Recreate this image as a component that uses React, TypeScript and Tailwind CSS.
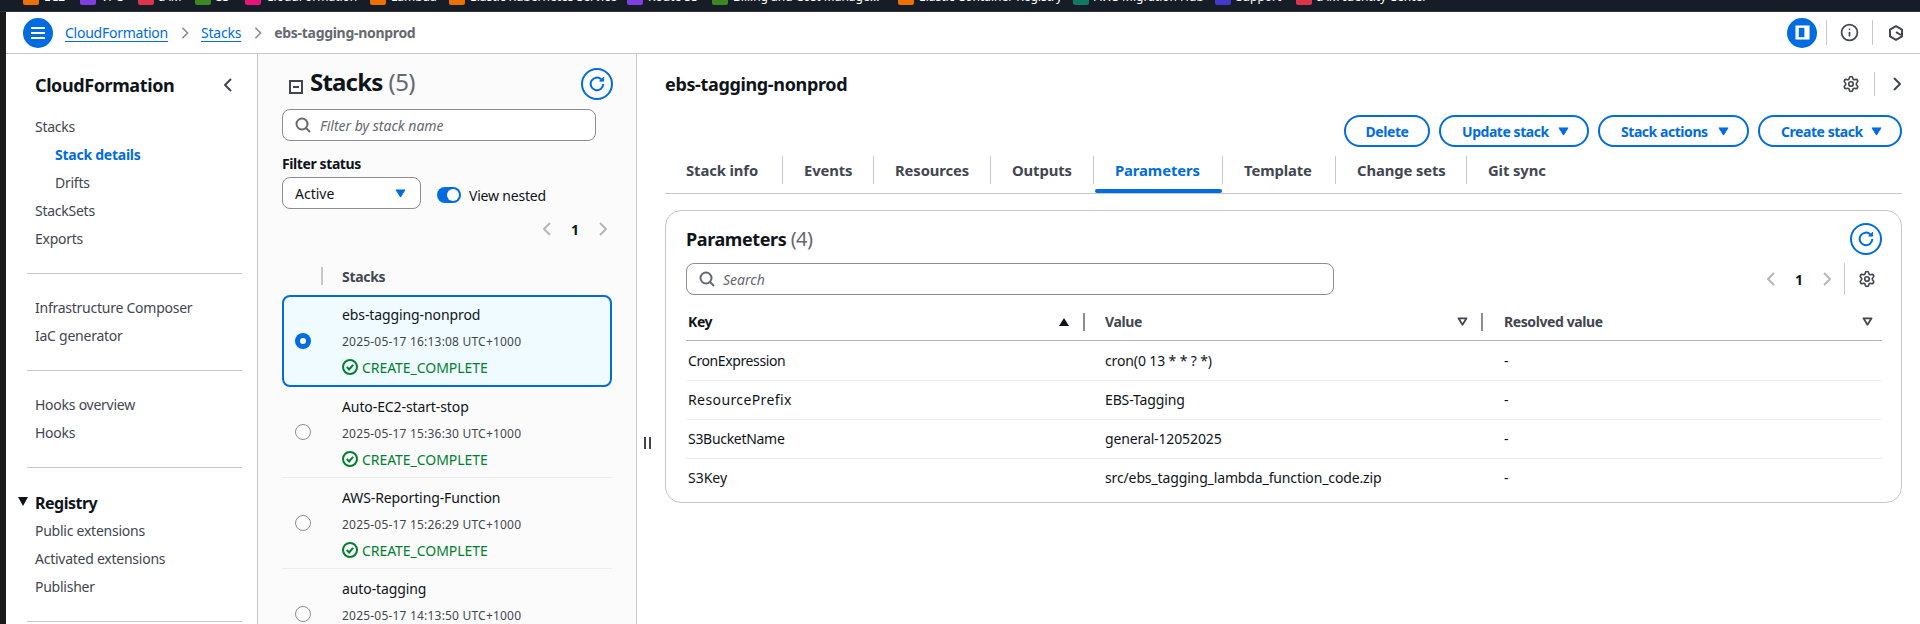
import { Info, Settings } from "lucide-react";

type IconProps = { className?: string };

const favourites = [
  { label: "EC2", box: "w-[57px] ml-[23px]", icon: "bg-[#ed7100]" },
  { label: "VPC", box: "w-[58px]", icon: "bg-[#7d3fe0]" },
  { label: "IAM", box: "w-[57px]", icon: "bg-[#dd344c]" },
  { label: "S3", box: "w-[50px]", icon: "bg-[#3f8624]" },
  { label: "CloudFormation", box: "w-[125px]", icon: "bg-[#e7157b]" },
  { label: "Lambda", box: "w-[79px]", icon: "bg-[#ed7100]" },
  { label: "Elastic Kubernetes Service", box: "w-[178px]", icon: "bg-[#ed7100]" },
  { label: "Route 53", box: "w-[85px]", icon: "bg-[#7d3fe0]" },
  { label: "Billing and Cost Manage...", box: "w-[186px]", icon: "bg-[#3f8624]" },
  { label: "Elastic Container Registry", box: "w-[175px]", icon: "bg-[#ed7100]" },
  { label: "AWS Migration Hub", box: "w-[142px]", icon: "bg-[#0e7a63]" },
  { label: "Support", box: "w-[81px]", icon: "bg-[#4338ca]" },
  { label: "IAM Identity Center", box: "w-[140px]", icon: "bg-[#dd344c]" },
];

const tabs = [
  { label: "Stack info", box: "w-[118px]" },
  { label: "Events", box: "w-[91px]" },
  { label: "Resources", box: "w-[117px]" },
  { label: "Outputs", box: "w-[103px]" },
  { label: "Parameters", box: "w-[129px]", active: true },
  { label: "Template", box: "w-[113px]" },
  { label: "Change sets", box: "w-[131px]" },
  { label: "Git sync", box: "w-[120px]", last: true },
];

const stacks = [
  { name: "ebs-tagging-nonprod", date: "2025-05-17 16:13:08 UTC+1000", selected: true },
  { name: "Auto-EC2-start-stop", date: "2025-05-17 15:36:30 UTC+1000" },
  { name: "AWS-Reporting-Function", date: "2025-05-17 15:26:29 UTC+1000" },
  { name: "auto-tagging", date: "2025-05-17 14:13:50 UTC+1000" },
];

const params = [
  { key: "CronExpression", value: "cron(0 13 * * ? *)", fit: "tracking-[-0.4px]" },
  { key: "ResourcePrefix", value: "EBS-Tagging", fit: "tracking-[0.4px]" },
  { key: "S3BucketName", value: "general-12052025", fit: "tracking-[-0.3px]" },
  { key: "S3Key", value: "src/ebs_tagging_lambda_function_code.zip", fit: "" },
];

function CaretDown({ className }: IconProps) {
  return (
    <svg viewBox="0 0 12 10" className={className} fill="currentColor">
      <path d="M1 1h10L6 9z" stroke="currentColor" strokeLinejoin="round" />
    </svg>
  );
}

function Chevron({ left, className }: IconProps & { left?: boolean }) {
  return (
    <svg viewBox="0 0 16 16" className={className} fill="none" stroke="currentColor" strokeWidth="2">
      <path d={left ? "M11 2 5 8l6 6" : "M5 2l6 6-6 6"} strokeLinejoin="round" />
    </svg>
  );
}

function Search({ className }: IconProps) {
  return (
    <svg viewBox="0 0 16 16" className={className} fill="none" stroke="currentColor" strokeWidth="2">
      <circle cx="7" cy="7" r="5.5" />
      <path d="m11 11 4 4" />
    </svg>
  );
}

function Refresh() {
  return (
    <span className="flex h-[32px] w-[32px] items-center justify-center rounded-full border-2 border-[#006ce0] text-[#006ce0]">
      <svg viewBox="0 0 16 16" className="h-4 w-4" fill="none" stroke="currentColor" strokeWidth="2">
        <path d="M14.3 8A6.3 6.3 0 1 1 12.4 3.4" />
        <path d="M14.6 1.2v3.9h-3.9z" fill="currentColor" strokeWidth="1" strokeLinejoin="round" />
      </svg>
    </span>
  );
}

function StatusOk() {
  return (
    <div className="mt-[5px] flex h-5 items-center text-[14px] tracking-[-0.05px] text-[#00802f]">
      <svg viewBox="0 0 16 16" className="mr-[4px] h-4 w-4" fill="none" stroke="currentColor" strokeWidth="2">
        <circle cx="8" cy="8" r="7" />
        <path d="m4.8 8 2.3 2.4 4-4.6" />
      </svg>
      CREATE_COMPLETE
    </div>
  );
}

function SortDown() {
  return (
    <svg viewBox="0 0 12 10" className="h-[9px] w-[11px] text-[#424650]" fill="none" stroke="currentColor" strokeWidth="2">
      <path d="M1.5 1.5h9L6 8.5z" strokeLinejoin="round" />
    </svg>
  );
}

function Pager() {
  return (
    <div className="flex items-center text-[#b4b4bb]">
      <Chevron left className="h-4 w-4" />
      <span className="w-[40px] text-center text-[14px] font-bold text-[#0f141a]">1</span>
      <Chevron className="h-4 w-4" />
    </div>
  );
}

function NavItem({ children, sub, active }: { children: string; sub?: boolean; active?: boolean }) {
  return (
    <div
      className={
        "flex h-[28px] items-center pb-px text-[14px] tracking-[-0.25px] " +
        (sub ? "pl-[20px] " : "") +
        (active ? "font-bold text-[#006ce0]" : "text-[#424650]")
      }
    >
      {children}
    </div>
  );
}

function Divider() {
  return <div className="my-5 h-px bg-[#c6c6cd]" />;
}

function ActionButton({ label, box, caret }: { label: string; box: string; caret?: boolean }) {
  return (
    <button
      type="button"
      className={
        "flex h-[32px] items-center rounded-[20px] border-2 border-[#006ce0] text-[14px] font-bold tracking-[-0.45px] text-[#006ce0] " +
        (caret ? "justify-between pl-[21px] pr-[18px] " : "justify-center ") +
        box
      }
    >
      {label}
      {caret ? <CaretDown className="h-[9px] w-[11px]" /> : null}
    </button>
  );
}

export default function App() {
  return (
    <div className="flex h-[624px] w-[1920px] flex-col overflow-hidden bg-white font-['Noto_Sans',sans-serif] text-[#0f141a]">
      {/* favourites bar, cut off by the top of the capture */}
      <div className="flex h-[12px] shrink-0 overflow-hidden border-b border-[#2c3440] bg-[#161d26] text-[12px] leading-[16px] text-white">
        {favourites.map((item) => (
          <div key={item.label} className={"-mt-[11px] flex h-[16px] shrink-0 items-center " + item.box}>
            <span className={"mr-[5px] h-[16px] w-[16px] shrink-0 rounded-[2px] " + item.icon} />
            <span className="whitespace-nowrap">{item.label}</span>
          </div>
        ))}
      </div>

      <div className="flex min-h-0 flex-1">
        <div className="w-[6px] shrink-0 bg-[#1b1b1b]" />
        <div className="flex min-w-0 flex-1 flex-col">
          {/* breadcrumbs */}
          <div className="flex h-[42px] shrink-0 items-center border-b border-[#c6c6cd] pl-[17px] text-[14px]">
            <span className="flex h-[30px] w-[30px] items-center justify-center rounded-full bg-[#006ce0]">
              <svg viewBox="0 0 16 16" className="h-4 w-4" stroke="white" strokeWidth="2">
                <path d="M1 3h14M1 8h14M1 13h14" />
              </svg>
            </span>
            <a className="ml-[12px] tracking-[-0.25px] text-[#006ce0] underline underline-offset-[3px]">CloudFormation</a>
            <Chevron className="ml-[10px] mr-[9px] h-[14px] w-[14px] text-[#8c8c94]" />
            <a className="tracking-[-0.2px] text-[#006ce0] underline underline-offset-[3px]">Stacks</a>
            <Chevron className="ml-[10px] mr-[9px] h-[14px] w-[14px] text-[#8c8c94]" />
            <span className="font-bold tracking-[-0.3px] text-[#656871]">ebs-tagging-nonprod</span>

            <div className="ml-auto flex items-center pr-[16px]">
              <span className="flex h-[30px] w-[30px] items-center justify-center rounded-full bg-[#006ce0]">
                <svg viewBox="0 0 16 16" className="h-[15px] w-[15px]">
                  <rect x="0.5" y="0.5" width="15" height="15" fill="white" />
                  <rect x="4" y="3" width="6" height="10" fill="#006ce0" />
                </svg>
              </span>
              <span className="ml-[9px] h-[25px] w-px bg-[#c6c6cd]" />
              <Info className="ml-[13px] h-[19px] w-[19px] text-[#424650]" strokeWidth={2.2} />
              <span className="ml-[13px] h-[25px] w-px bg-[#c6c6cd]" />
              <svg viewBox="0 0 16 16" className="ml-[15px] h-4 w-4 text-[#424650]" fill="none" stroke="currentColor" strokeWidth="2">
                <path d="M8 1.2 14 4.6v6.8l-6 3.4-6-3.4V4.6z" strokeLinejoin="round" />
                <path d="M8 7.2 13 10" />
              </svg>
            </div>
          </div>

          <div className="flex min-h-0 flex-1">
            {/* side navigation */}
            <nav className="w-[252px] shrink-0 border-r border-[#c6c6cd] pl-[21px] pr-[15px] pt-[17px]">
              <div className="flex h-[28px] items-center justify-between pl-[8px] pr-[6px]">
                <span className="text-[18px] font-bold tracking-[-0.4px]">CloudFormation</span>
                <Chevron left className="h-4 w-4 text-[#424650]" />
              </div>
              <div className="mt-[14px] pl-[8px]">
                <NavItem>Stacks</NavItem>
                <NavItem sub active>Stack details</NavItem>
                <NavItem sub>Drifts</NavItem>
                <NavItem>StackSets</NavItem>
                <NavItem>Exports</NavItem>
              </div>
              <Divider />
              <div className="pl-[8px]">
                <NavItem>Infrastructure Composer</NavItem>
                <NavItem>IaC generator</NavItem>
              </div>
              <Divider />
              <div className="pl-[8px]">
                <NavItem>Hooks overview</NavItem>
                <NavItem>Hooks</NavItem>
              </div>
              <Divider />
              <div className="relative flex h-[29px] items-center pl-[8px] text-[16px] font-bold tracking-[-0.5px]">
                <span className="absolute -left-[9px] top-[9px] h-0 w-0 border-x-[5px] border-t-[9px] border-x-transparent border-t-[#0f141a]" />
                Registry
              </div>
              <div className="pl-[8px]">
                <NavItem>Public extensions</NavItem>
                <NavItem>Activated extensions</NavItem>
                <NavItem>Publisher</NavItem>
              </div>
              <Divider />
            </nav>

            {/* stack list */}
            <section className="w-[379px] shrink-0 border-r border-[#c6c6cd] bg-[#fbfbfb] pl-[24px] pr-[24px] pt-[14px]">
              <div className="flex h-[32px] items-center justify-between">
                <div className="-mt-[4px] flex items-center pl-[7px]">
                  <svg viewBox="0 0 14 14" className="mt-[10px] h-[14px] w-[14px] text-[#424650]" fill="none" stroke="currentColor" strokeWidth="2">
                    <rect x="1" y="1" width="12" height="12" />
                    <path d="M4 7h6" />
                  </svg>
                  <span className="ml-[7px] text-[24px] font-bold leading-[28px] tracking-[-0.8px]">Stacks</span>
                  <span className="ml-[6px] text-[24px] leading-[28px] tracking-[-0.6px] text-[#656871]">(5)</span>
                </div>
                <span className="-mr-px">
                  <Refresh />
                </span>
              </div>

              <div className="mt-[9px] flex h-[32px] w-[314px] items-center rounded-[8px] border border-[#8c8c94] bg-white pl-[12px] text-[14px] italic text-[#656871]">
                <Search className="mr-[9px] h-4 w-4 text-[#656871]" />
                Filter by stack name
              </div>

              <div className="mt-[12px] flex h-5 items-center text-[14px] font-bold tracking-[-0.4px]">Filter status</div>
              <div className="mt-[4px] flex items-center">
                <div className="flex h-[32px] w-[139px] items-center justify-between rounded-[8px] border border-[#8c8c94] bg-white pl-[12px] pr-[14px] text-[14px]">
                  Active
                  <CaretDown className="h-[9px] w-[11px] text-[#006ce0]" />
                </div>
                <span className="ml-[16px] mt-[4px] flex h-[16px] w-[24px] items-center justify-end rounded-full bg-[#006ce0] pr-[2px]">
                  <span className="h-[12px] w-[12px] rounded-full bg-white" />
                </span>
                <span className="ml-[8px] mt-[4px] text-[14px] tracking-[-0.2px]">View nested</span>
              </div>

              <div className="mt-[10px] flex h-5 items-center justify-end pr-[1px]">
                <Pager />
              </div>

              <div className="mt-[18px] flex h-[38px] items-center pl-[39px]">
                <span className="h-[18px] w-[2px] bg-[#c6c6cd]" />
                <span className="ml-[19px] text-[14px] font-bold tracking-[-0.3px] text-[#424650]">Stacks</span>
              </div>

              {stacks.map((stack) => (
                <div
                  key={stack.name}
                  className={
                    "flex items-center " +
                    (stack.selected
                      ? "h-[92px] rounded-[8px] border-2 border-[#006ce0] bg-[#f0fbff] pl-[11px]"
                      : "h-[91px] border-b border-[#ebebf0] pl-[13px]")
                  }
                >
                  {stack.selected ? (
                    <span className="flex h-4 w-4 shrink-0 items-center justify-center rounded-full bg-[#006ce0]">
                      <span className="h-[6px] w-[6px] rounded-full bg-white" />
                    </span>
                  ) : (
                    <span className="h-4 w-4 shrink-0 rounded-full border border-[#8c8c94] bg-white" />
                  )}
                  <div className={"ml-[31px] h-full " + (stack.selected ? "pt-[7px]" : "pt-[9px]")}>
                    <div className="flex h-5 items-center text-[14px] tracking-[-0.1px]">{stack.name}</div>
                    <div className="mt-[8px] flex h-5 items-center text-[12px] tracking-[0.2px] text-[#424650]">{stack.date}</div>
                    <StatusOk />
                  </div>
                </div>
              ))}
            </section>

            {/* resize handle */}
            <div className="w-[28px] shrink-0 pl-[7px] pt-[383px]">
              <div className="flex h-[12px] w-[7px] justify-between">
                <span className="w-[2px] bg-[#424650]" />
                <span className="w-[2px] bg-[#424650]" />
              </div>
            </div>

            {/* stack details */}
            <main className="w-[1237px] shrink-0 pt-[18px]">
              <div className="flex h-[24px] items-center justify-between">
                <h1 className="text-[18px] font-bold tracking-[-0.35px]">ebs-tagging-nonprod</h1>
                <div className="flex items-center text-[#424650]">
                  <Settings className="h-[18px] w-[18px]" strokeWidth={2.2} />
                  <span className="ml-[14px] h-[24px] w-px bg-[#c6c6cd]" />
                  <Chevron className="ml-[14px] mr-[-3px] h-4 w-4" />
                </div>
              </div>

              <div className="mt-[19px] flex justify-end gap-[9px]">
                <ActionButton label="Delete" box="w-[86px]" />
                <ActionButton label="Update stack" box="w-[150px]" caret />
                <ActionButton label="Stack actions" box="w-[151px]" caret />
                <ActionButton label="Create stack" box="w-[144px]" caret />
              </div>

              <div className="mt-[9px] flex h-[38px] border-b border-[#c6c6cd]">
                {tabs.map((tab) => (
                  <div key={tab.label} className={"relative shrink-0 " + tab.box}>
                    <div
                      className={
                        "flex h-[28px] items-center pl-[21px] text-[14.8px] font-bold tracking-[-0.1px] " +
                        (tab.last ? "" : "border-r border-[#c6c6cd] ") +
                        (tab.active ? "text-[#006ce0]" : "text-[#424650]")
                      }
                    >
                      {tab.label}
                    </div>
                    {tab.active ? (
                      <span className="absolute bottom-0 left-[1px] right-[1px] h-[4px] rounded-[2px] bg-[#006ce0]" />
                    ) : null}
                  </div>
                ))}
              </div>

              <div className="mt-4 h-[293px] rounded-[16px] border border-[#c6c6cd] pl-[20px] pr-[19px] pt-[12px]">
                <div className="flex h-[32px] items-center justify-between">
                  <div className="text-[18px] font-bold tracking-[-0.4px]">
                    Parameters <span className="text-[20px] font-normal tracking-[-0.6px] text-[#656871]">(4)</span>
                  </div>
                  <Refresh />
                </div>

                <div className="mt-[8px] flex h-[32px] items-center">
                  <div className="flex h-[32px] w-[648px] items-center rounded-[8px] border border-[#8c8c94] pl-[12px] text-[14px] italic text-[#656871]">
                    <Search className="mr-[8px] h-4 w-4 text-[#656871]" />
                    Search
                  </div>
                  <div className="ml-auto flex h-[32px] items-center">
                    <Pager />
                    <span className="ml-[9px] h-[32px] w-px bg-[#c6c6cd]" />
                    <Settings className="ml-[13px] mr-[6px] h-[18px] w-[18px] text-[#424650]" strokeWidth={2.2} />
                  </div>
                </div>

                <div className="mt-[8px] grid h-[38px] grid-cols-[399px_398px_1fr] border-b border-[#b4b4bb] text-[14px] font-bold tracking-[-0.4px]">
                  <div className="flex items-center pl-[2px]">
                    Key
                    <span className="ml-auto h-0 w-0 border-x-[5px] border-b-[8px] border-x-transparent border-b-[#0f141a]" />
                    <span className="ml-[14px] h-[18px] w-[2px] bg-[#8c8c94]" />
                  </div>
                  <div className="flex items-center pl-[20px] text-[#424650]">
                    Value
                    <span className="ml-auto">
                      <SortDown />
                    </span>
                    <span className="ml-[13px] h-[18px] w-[2px] bg-[#8c8c94]" />
                  </div>
                  <div className="flex items-center pl-[21px] text-[#424650]">
                    Resolved value
                    <span className="ml-auto mr-[9px]">
                      <SortDown />
                    </span>
                  </div>
                </div>

                <div className="mt-px">
                  {params.map((row, i) => (
                    <div
                      key={row.key}
                      className={
                        "grid h-[39px] grid-cols-[399px_398px_1fr] items-center pb-[2px] text-[14px] " +
                        (i < params.length - 1 ? "border-b border-[#ebebf0]" : "")
                      }
                    >
                      <div className={"pl-[2px] " + row.fit}>{row.key}</div>
                      <div className="pl-[20px] tracking-[-0.13px]">{row.value}</div>
                      <div className="pl-[21px]">-</div>
                    </div>
                  ))}
                </div>
              </div>
            </main>
          </div>
        </div>
      </div>
    </div>
  );
}
